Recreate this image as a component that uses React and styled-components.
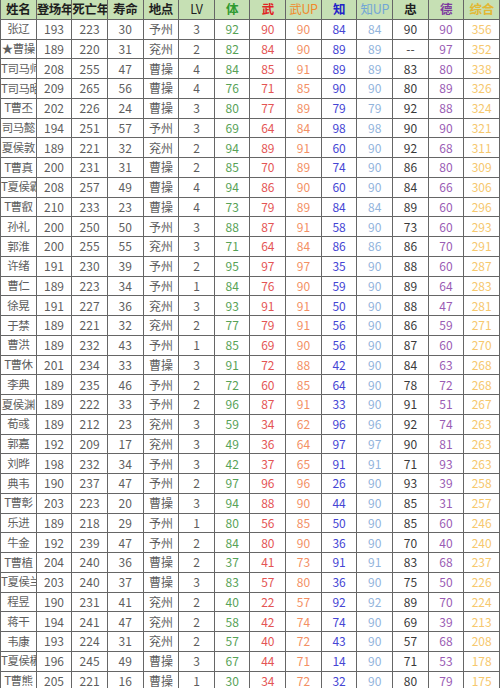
import React from "react";
import styled, { createGlobalStyle } from "styled-components";

const GlobalStyle = createGlobalStyle`
  html, body {
    margin: 0;
    padding: 0;
    background: #ffffff;
  }
  body {
    font-family: "Noto Sans CJK SC", "Noto Sans", sans-serif;
  }
`;

// column header label, header colour, cell colour
const columns = [
  { label: "姓名", head: "#1f1f1f", cell: "#5e5e5e" },
  { label: "登场年", head: "#1f1f1f", cell: "#5e5e5e" },
  { label: "死亡年", head: "#1f1f1f", cell: "#5e5e5e" },
  { label: "寿命", head: "#1f1f1f", cell: "#5e5e5e" },
  { label: "地点", head: "#1f1f1f", cell: "#5e5e5e" },
  { label: "LV", head: "#1f1f1f", cell: "#5e5e5e", light: true },
  { label: "体", head: "#2f9a2f", cell: "#57a257" },
  { label: "武", head: "#e02424", cell: "#e45555" },
  { label: "武UP", head: "#f08a2c", cell: "#f39064", light: true },
  { label: "知", head: "#2222c8", cell: "#4545d4" },
  { label: "知UP", head: "#72a6d6", cell: "#92b4dc", light: true },
  { label: "忠", head: "#1f1f1f", cell: "#3a3a3a" },
  { label: "德", head: "#7c3a9e", cell: "#9a5cb4" },
  { label: "综合", head: "#e2b834", cell: "#f6c86e" },
];

const rows = [
  ["张辽", 193, 223, 30, "予州", 3, 92, 90, 90, 84, 84, 90, 90, 356],
  ["★曹操", 189, 220, 31, "兖州", 2, 82, 84, 90, 89, 89, "--", 97, 352],
  ["T司马师", 208, 255, 47, "曹操", 4, 84, 85, 91, 89, 89, 83, 80, 338],
  ["T司马昭", 209, 265, 56, "曹操", 4, 76, 71, 85, 90, 90, 80, 89, 326],
  ["T曹丕", 202, 226, 24, "曹操", 3, 80, 77, 89, 79, 79, 92, 88, 324],
  ["司马懿", 194, 251, 57, "予州", 3, 69, 64, 84, 98, 98, 90, 90, 321],
  ["夏侯敦", 189, 221, 32, "兖州", 2, 94, 89, 91, 60, 90, 92, 68, 311],
  ["T曹真", 200, 231, 31, "曹操", 2, 85, 70, 89, 74, 90, 86, 80, 309],
  ["T夏侯霸", 208, 257, 49, "曹操", 4, 94, 86, 90, 60, 90, 84, 66, 306],
  ["T曹叡", 210, 233, 23, "曹操", 4, 73, 79, 89, 84, 84, 89, 60, 296],
  ["孙礼", 200, 250, 50, "予州", 3, 88, 87, 91, 58, 90, 73, 60, 293],
  ["郭淮", 200, 255, 55, "兖州", 3, 71, 64, 84, 86, 86, 86, 70, 291],
  ["许绪", 191, 230, 39, "予州", 2, 95, 97, 97, 35, 90, 88, 60, 287],
  ["曹仁", 189, 223, 34, "予州", 1, 84, 76, 90, 59, 90, 89, 64, 283],
  ["徐晃", 191, 227, 36, "兖州", 3, 93, 91, 91, 50, 90, 88, 47, 281],
  ["于禁", 189, 221, 32, "兖州", 2, 77, 79, 91, 56, 90, 86, 59, 271],
  ["曹洪", 189, 232, 43, "予州", 1, 85, 69, 90, 56, 90, 87, 60, 270],
  ["T曹休", 201, 234, 33, "曹操", 3, 91, 72, 88, 42, 90, 84, 63, 268],
  ["李典", 189, 235, 46, "予州", 2, 72, 60, 85, 64, 90, 78, 72, 268],
  ["夏侯渊", 189, 222, 33, "予州", 2, 96, 87, 91, 33, 90, 91, 51, 267],
  ["荀彧", 189, 212, 23, "兖州", 3, 59, 34, 62, 96, 96, 92, 74, 263],
  ["郭嘉", 192, 209, 17, "兖州", 3, 49, 36, 64, 97, 97, 90, 81, 263],
  ["刘晔", 198, 232, 34, "予州", 3, 42, 37, 65, 91, 91, 71, 93, 263],
  ["典韦", 190, 237, 47, "予州", 2, 97, 96, 96, 26, 90, 93, 39, 258],
  ["T曹彰", 203, 223, 20, "曹操", 3, 94, 88, 90, 44, 90, 85, 31, 257],
  ["乐进", 189, 218, 29, "予州", 1, 80, 56, 85, 50, 90, 85, 60, 246],
  ["牛金", 192, 239, 47, "予州", 2, 84, 80, 90, 36, 90, 70, 40, 240],
  ["T曹植", 204, 240, 36, "曹操", 2, 37, 41, 73, 91, 91, 83, 68, 237],
  ["T夏侯兰", 203, 240, 37, "曹操", 3, 83, 57, 80, 36, 90, 75, 50, 226],
  ["程昱", 190, 231, 41, "兖州", 2, 40, 22, 57, 92, 92, 89, 70, 224],
  ["蒋干", 194, 241, 47, "兖州", 2, 58, 42, 74, 74, 90, 69, 39, 213],
  ["韦康", 193, 224, 31, "兖州", 2, 57, 40, 72, 43, 90, 57, 68, 208],
  ["T夏侯楙", 196, 245, 49, "曹操", 3, 67, 44, 71, 14, 90, 71, 53, 178],
  ["T曹熊", 205, 221, 16, "曹操", 1, 30, 34, 72, 32, 90, 80, 79, 175],
];

const Sheet = styled.div`
  width: 500px;
  height: 688px;
  overflow: hidden;
  display: grid;
  grid-template-columns: repeat(14, 1fr);
  grid-auto-rows: 19.75px;
  border-left: 1px solid #666666;
  box-sizing: border-box;
`;

const Cell = styled.div`
  display: flex;
  align-items: center;
  justify-content: safe center;
  overflow: hidden;
  white-space: nowrap;
  box-sizing: border-box;
  border-right: 1px solid #666666;
  border-bottom: 1px solid #666666;
  font-size: ${(p) => (p.$name ? "11.5px" : "12px")};
  letter-spacing: ${(p) => (p.$name ? "-0.5px" : "0")};
  line-height: 1;
  color: ${(p) => p.$color};
  background: #ffffff;
`;

const HeadCell = styled(Cell)`
  background: #c6e0b4;
  font-size: 12.5px;
  font-weight: ${(p) => (p.$light ? 400 : 700)};
  letter-spacing: -0.3px;
`;

export default function App() {
  return (
    <>
      <GlobalStyle />
      <Sheet>
        {columns.map((c) => (
          <HeadCell key={c.label} $color={c.head} $light={c.light}>
            {c.label}
          </HeadCell>
        ))}
        {rows.map((row, r) =>
          row.map((value, i) => (
            <Cell key={r + "-" + i} $color={columns[i].cell} $name={i === 0}>
              {value}
            </Cell>
          ))
        )}
      </Sheet>
    </>
  );
}
